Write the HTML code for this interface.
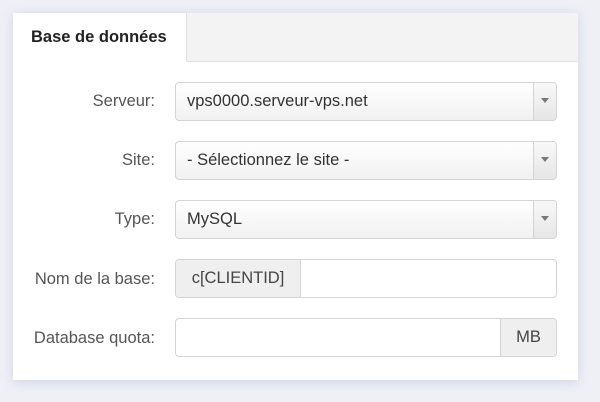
<!DOCTYPE html><html><head><style>
body{margin:0;width:600px;height:402px;background:#eef0f6;font-family:"Liberation Sans",sans-serif;position:relative;overflow:hidden}
.panel{position:absolute;left:13px;top:13px;width:565px;height:367px;background:#fff;box-shadow:0 2px 10px rgba(150,160,200,.35)}
.tabbar{position:absolute;left:0;top:0;width:565px;height:48px;background:#f3f3f4;border-bottom:1px solid #e2e2e2}
.tab{position:absolute;left:0;top:0;width:174px;height:49px;background:#fff;border-right:1px solid #e2e2e2;font-weight:bold;font-size:16.5px;color:#222;line-height:48px;padding-left:18px;box-sizing:border-box}
.lbl{position:absolute;right:423px;font-size:16.5px;color:#555;text-align:right;white-space:nowrap}
.ctl{position:absolute;left:162px;width:382px;height:39px;border:1px solid #d4d4d4;border-radius:4px;box-sizing:border-box;font-size:16.5px;color:#333;overflow:hidden}
.sel{background:linear-gradient(#fff,#f1f1f1)}
.sel span{position:absolute;left:11px;top:9px}
.arr{position:absolute;right:0;top:0;width:22px;height:100%;border-left:1px solid #d4d4d4;background:linear-gradient(#f8f8f8,#e6e6e6)}
.arr:after{content:"";position:absolute;left:7px;top:15px;border-left:4px solid transparent;border-right:4px solid transparent;border-top:5px solid #777}
.add{position:absolute;top:0;height:100%;background:#efefef;color:#444;line-height:37px;text-align:center}
</style></head><body>
<div class="panel">
<div class="tabbar"></div><div class="tab">Base de données</div>
<div class="lbl" style="top:79px">Serveur:</div>
<div class="ctl sel" style="top:69px"><span>vps0000.serveur-vps.net</span><div class="arr"></div></div>
<div class="lbl" style="top:138px">Site:</div>
<div class="ctl sel" style="top:128px"><span>- Sélectionnez le site -</span><div class="arr"></div></div>
<div class="lbl" style="top:197px">Type:</div>
<div class="ctl sel" style="top:187px"><span>MySQL</span><div class="arr"></div></div>
<div class="lbl" style="top:257px">Nom de la base:</div>
<div class="ctl" style="top:246px"><div class="add" style="left:0;width:124px;border-right:1px solid #d4d4d4">c[CLIENTID]</div></div>
<div class="lbl" style="top:316px">Database quota:</div>
<div class="ctl" style="top:305px"><div class="add" style="right:0;width:55px;border-left:1px solid #d4d4d4">MB</div></div>
</div>
</body></html>
